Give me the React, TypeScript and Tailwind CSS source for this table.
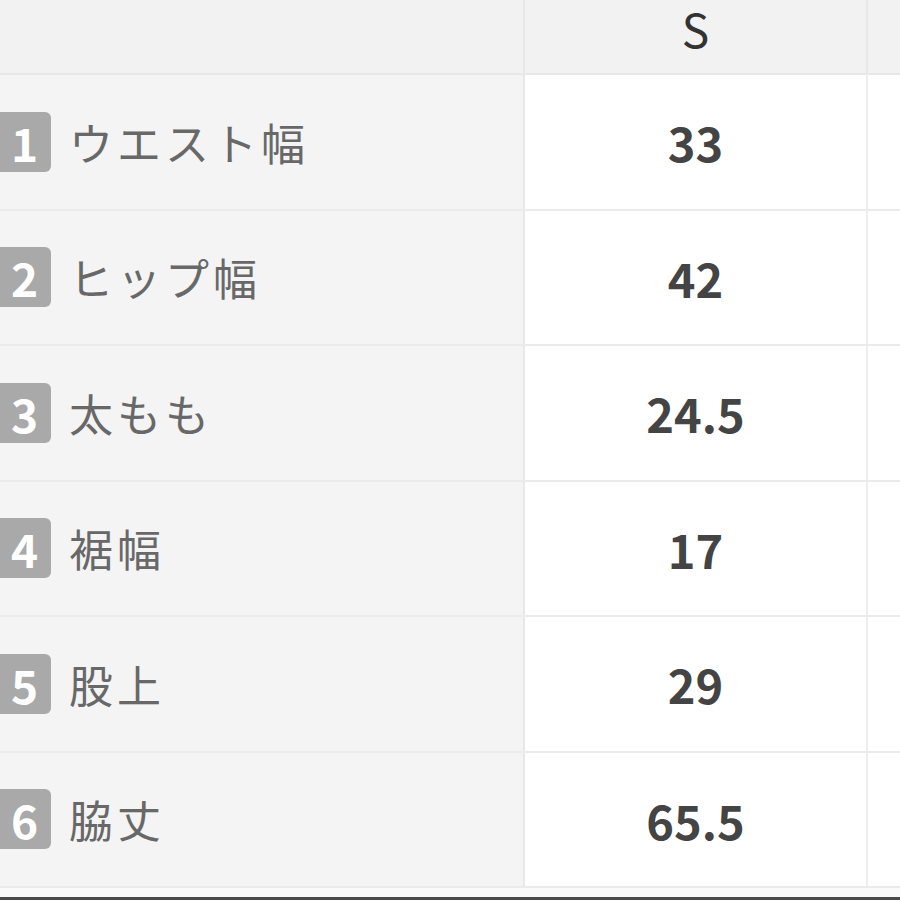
const rows = [
  { no: '1', label: 'ウエスト幅', value: '33' },
  { no: '2', label: 'ヒップ幅', value: '42' },
  { no: '3', label: '太もも', value: '24.5' },
  { no: '4', label: '裾幅', value: '17' },
  { no: '5', label: '股上', value: '29' },
  { no: '6', label: '脇丈', value: '65.5' },
];

const font = { fontFamily: '"Noto Sans CJK JP", "Noto Sans", sans-serif' };

export default function App() {
  return (
    <div className="w-[900px] h-[900px] overflow-hidden bg-[#fafafa] flex flex-col" style={font}>
      {/* header */}
      <div className="flex h-[75px] shrink-0 bg-[#f2f2f2] border-b-2 border-[#e8e8e8]">
        <div className="w-[525px] shrink-0 border-r-2 border-[#e8e8e8]" />
        <div className="w-[343px] shrink-0 border-r-2 border-[#e8e8e8] flex justify-center items-start">
          <span className="text-[46px] leading-[56px] text-[#333]">S</span>
        </div>
        <div className="flex-1" />
      </div>

      {rows.map((r) => (
        <div key={r.no} className="flex h-[135.5px] shrink-0 border-b-2 border-[#ebebeb]">
          <div className="w-[525px] shrink-0 bg-[#f4f4f4] border-r-2 border-[#e8e8e8] flex items-center">
            <div className="ml-[-10px] w-[61px] h-[60px] rounded-[6px] bg-[#a9a9a9] flex items-center justify-center">
              <span className="text-white font-bold text-[46px] leading-none pl-[8px]">{r.no}</span>
            </div>
            <span className="ml-[18px] text-[44px] tracking-[4px] text-[#686868] leading-none">{r.label}</span>
          </div>
          <div className="w-[343px] shrink-0 bg-white border-r-2 border-[#eeeeee] flex items-center justify-center">
            <span className="text-[47px] font-bold text-[#444] leading-none">{r.value}</span>
          </div>
          <div className="flex-1 bg-white" />
        </div>
      ))}

      <div className="flex-1" />
      <div className="h-[3px] shrink-0 bg-[#4a4a4a]" />
    </div>
  );
}
